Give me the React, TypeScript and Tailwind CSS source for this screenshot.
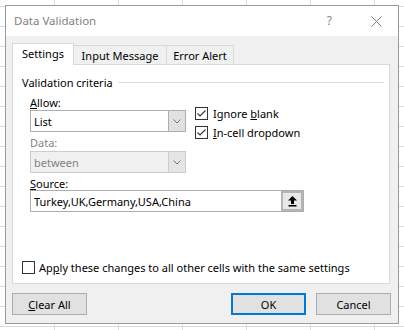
import React from "react";

const font = { fontFamily: '"Noto Sans", "Open Sans", sans-serif' };

function Check({ checked }: { checked: boolean }) {
  return (
    <span className="flex h-[13px] w-[13px] shrink-0 items-center justify-center border border-[#333333] bg-white">
      {checked && (
        <svg width="11" height="11" viewBox="0 0 11 11">
          <polyline points="1.5,5.5 4,8 9.5,2.5" fill="none" stroke="#333333" strokeWidth="1.1" />
        </svg>
      )}
    </span>
  );
}

function Chevron({ color }: { color: string }) {
  return (
    <svg width="8" height="5" viewBox="0 0 8 5">
      <polyline points="0.5,0.5 4,4 7.5,0.5" fill="none" stroke={color} strokeWidth="1" />
    </svg>
  );
}

function Select({ value, disabled }: { value: string; disabled?: boolean }) {
  return (
    <div
      className={
        "flex h-[22px] w-[156px] border " +
        (disabled ? "border-[#cccccc] bg-[#f0f0f0] text-[#838383]" : "border-[#adadad] bg-white text-black")
      }
    >
      <div className="flex flex-1 items-center pl-[3px] leading-none">{value}</div>
      <div
        className={
          "flex w-[17px] items-center justify-center border-l " +
          (disabled ? "border-[#cccccc] bg-[#e5e5e5]" : "border-[#adadad] bg-[#e1e1e1]")
        }
      >
        <Chevron color="#707070" />
      </div>
    </div>
  );
}

function Button({ children, primary, className }: { children: React.ReactNode; primary?: boolean; className?: string }) {
  return (
    <div
      className={
        "flex h-[22px] w-[75px] items-center justify-center bg-[#e1e1e1] leading-none text-black " +
        (primary ? "border-2 border-[#0078d7] " : "border border-[#adadad] ") +
        (className ?? "")
      }
    >
      {children}
    </div>
  );
}

export default function App() {
  return (
    <div
      className="h-[330px] w-[404px] overflow-hidden bg-white pl-[5px] pt-[5px] text-[11px] [background-image:linear-gradient(to_right,#dadada_1px,transparent_1px),linear-gradient(to_bottom,#dadada_1px,transparent_1px)] [background-position:54px_6px] [background-size:64px_20px]"
      style={font}
    >
      <div className="flex h-[319px] w-[394px] flex-col border border-[#9a9a9a] bg-[#f0f0f0]">
        {/* title bar */}
        <div className="flex h-[30px] items-center bg-white pl-[8px] pr-[16px] text-[#7f7f7f]">
          <span className="flex-1 text-[11.5px]">Data Validation</span>
          <span className="mr-[39px] text-[12px] text-[#8a8a8a]">?</span>
          <svg width="11" height="11" viewBox="0 0 11 11">
            <path d="M0.5 0.5 L10.5 10.5 M10.5 0.5 L0.5 10.5" stroke="#808080" strokeWidth="1" />
          </svg>
        </div>

        <div className="flex flex-1 flex-col pl-[6px] pr-[8px] pt-[7px]">
          {/* tabs */}
          <div className="flex h-[21px] items-end">
            <div className="relative z-10 flex h-[22px] w-[62px] items-start justify-center self-start border border-b-0 border-[#d9d9d9] bg-white pt-[4px] leading-none">
              Settings
            </div>
            <div className="flex h-[19px] w-[93px] items-center justify-center border-r border-t border-[#d9d9d9] pt-[1px] leading-none">
              Input Message
            </div>
            <div className="flex h-[19px] w-[67px] items-center justify-center border-r border-t border-[#d9d9d9] pt-[1px] leading-none">
              Error Alert
            </div>
          </div>

          {/* settings panel */}
          <div className="flex h-[220px] w-[378px] flex-col border border-[#d9d9d9] bg-white pl-[9px] pr-[5px]">
            <div className="mt-[9px] flex h-[16px] items-center">
              <span className="leading-none">Validation criteria</span>
              <span className="ml-[5px] h-px flex-1 bg-[#dcdcdc]" />
            </div>

            <div className="flex pl-[8px]">
              <div className="flex flex-col">
                <div className="mt-[5px] flex h-[14px] items-center leading-none">
                  <span>
                    <u>A</u>llow:
                  </span>
                </div>
                <div className="mt-px">
                  <Select value="List" />
                </div>
                <div className="mt-[3px] flex h-[14px] items-center leading-none text-[#838383]">Data:</div>
                <div className="mt-[2px]">
                  <Select value="between" disabled />
                </div>
              </div>

              <div className="ml-[9px] flex flex-col gap-[6px] pt-[17px]">
                <div className="flex items-center gap-[5px] leading-none">
                  <Check checked />
                  <span>
                    Ignore <u>b</u>lank
                  </span>
                </div>
                <div className="flex items-center gap-[5px] leading-none">
                  <Check checked />
                  <span>
                    <u>I</u>n-cell dropdown
                  </span>
                </div>
              </div>
            </div>

            <div className="ml-[8px] mt-[3px] flex h-[14px] items-center leading-none">
              <span>
                <u>S</u>ource:
              </span>
            </div>
            <div className="ml-[8px] flex h-[22px] w-[274px] border border-[#adadad] bg-white">
              <div className="flex flex-1 items-center pl-[3px] leading-none">Turkey,UK,Germany,USA,China</div>
              <div className="flex w-[22px] items-center justify-center border-2 border-[#b4b4b4] bg-[#e8e8e8]">
                <svg width="9" height="11" viewBox="0 0 9 11">
                  <polygon points="4.5,0 0,4.5 9,4.5" fill="#000000" />
                  <rect x="3" y="4" width="3" height="4" fill="#000000" />
                  <rect x="0.5" y="9" width="8" height="1.5" fill="#000000" />
                </svg>
              </div>
            </div>

            <div className="mb-[9px] mt-auto flex items-center gap-[4px] leading-none">
              <Check checked={false} />
              <span>
                Ap<u>p</u>ly these changes to all other cells with the same settings
              </span>
            </div>
          </div>

          {/* buttons */}
          <div className="mt-[9px] flex">
            <Button>
              <span>
                <u>C</u>lear All
              </span>
            </Button>
            <Button primary className="ml-auto w-[74px]">
              OK
            </Button>
            <Button className="ml-[10px] mr-[-1px] w-[74px]">Cancel</Button>
          </div>
        </div>
      </div>
    </div>
  );
}
